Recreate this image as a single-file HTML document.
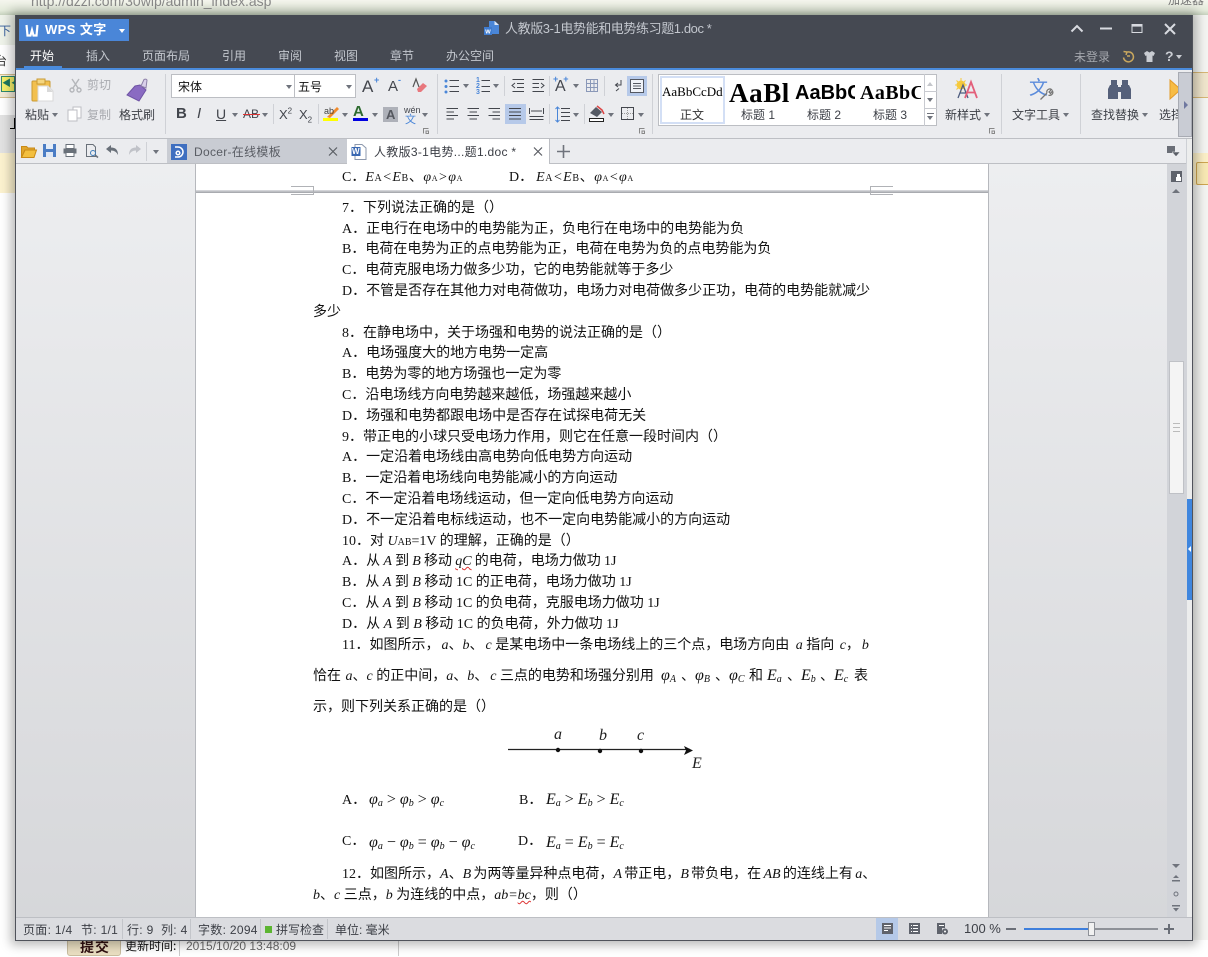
<!DOCTYPE html>
<html lang="zh"><head><meta charset="utf-8"><title>WPS 文字</title>
<style>
html,body{margin:0;padding:0}
body{width:1208px;height:956px;overflow:hidden;position:relative;background:#fff;font-family:"Liberation Sans","Noto Sans CJK SC",sans-serif;}
.a{position:absolute}
.t{position:absolute;white-space:nowrap}
.u{position:absolute;white-space:nowrap;font-size:12px;line-height:16px;color:#3c3f46;font-family:"Liberation Sans","Noto Sans CJK SC",sans-serif}
.s{letter-spacing:.3px}
.m{position:absolute;white-space:nowrap;font-size:12px;line-height:16px;color:#c3c7ce;transform:translateX(-50%)}
.d{position:absolute;white-space:nowrap;font-size:14px;line-height:20px;color:#111;font-family:"Liberation Serif","WenQuanYi Zen Hei","Noto Sans CJK SC",serif;letter-spacing:0;margin-top:2px}
.d i{font-family:"Liberation Serif",serif;font-style:italic}
.d sub{font-size:9px;line-height:0;vertical-align:-2px}
.f{font-size:16px}
.f sub{font-size:10px}
.sep{position:absolute;width:1px;background:#cfd1d6}
.arr{position:absolute;width:0;height:0;border-left:3.5px solid transparent;border-right:3.5px solid transparent;border-top:4px solid #6f737c}
.sq{position:absolute;width:1px;background:#c3c5ca}
svg{position:absolute;overflow:visible}
</style></head><body>

<!-- background behind the window -->
<div class="a" style="left:0;top:0;width:1208px;height:15px;background:linear-gradient(#f5f6ee,#e4ebdb 70%,#c7d3bf)"></div>
<div class="t" style="left:31px;top:-7px;font-size:14px;color:#8a8a8a">http://dzzi.com/30wip/admin_index.asp</div>
<div class="t" style="left:1168px;top:-9px;font-size:12px;color:#777;font-family:'Noto Sans CJK SC',sans-serif">加速器</div>
<div class="a" style="left:0;top:15px;width:15px;height:30px;background:#eff3ea"></div>
<div class="t" style="left:-1px;top:22px;font-size:12px;color:#345d9b;font-family:'Noto Sans CJK SC',sans-serif">下</div>
<div class="a" style="left:0;top:45px;width:15px;height:26px;background:#fff"></div>
<div class="t" style="left:-5px;top:52px;font-size:12px;color:#333;font-family:'Noto Sans CJK SC',sans-serif">台</div>
<div class="a" style="left:0;top:74px;width:15px;height:22px;background:#f3ead6;border-top:1px solid #d5bf8e;border-bottom:1px solid #d5bf8e"></div>
<div class="a" style="left:1px;top:76px;width:12px;height:14px;background:#f5f06a;border:1px solid #2f8a70"></div>
<div class="t" style="left:2px;top:78px;font-size:9px;line-height:10px;color:#1f7a60;font-weight:bold">◀◀</div>
<div class="a" style="left:0;top:115px;width:15px;height:38px;background:#e2e2e2"></div>
<div class="a" style="left:10px;top:128px;width:5px;height:1px;background:#000"></div>
<div class="a" style="left:14px;top:118px;width:1px;height:11px;background:#000"></div>
<div class="a" style="left:0;top:153px;width:15px;height:40px;background:#fcf2cf"></div>
<div class="a" style="left:1193px;top:15px;width:15px;height:941px;background:#f4f5f2"></div>
<div class="a" style="left:1193px;top:72px;width:15px;height:24px;background:#f0e6cd;border-top:1px solid #d8b775;border-bottom:1px solid #d8b775"></div>
<div class="a" style="left:1193px;top:153px;width:15px;height:32px;background:#fcf0c8"></div>
<div class="a" style="left:1196px;top:162px;width:12px;height:21px;background:#f8e9b4;border:1px solid #cfa650;border-radius:2px"></div>
<div class="a" style="left:0;top:940px;width:1208px;height:16px;background:#fff"></div>
<div class="a" style="left:67px;top:936px;width:54px;height:20px;background:#eadfc2;border:1px solid #c9bd9f;box-sizing:border-box;border-radius:3px"></div>
<div class="t" style="left:80px;top:937px;font-size:14px;line-height:20px;font-weight:bold;color:#301010;font-family:'Noto Sans CJK SC',sans-serif;letter-spacing:1px">提交</div>
<div class="t" style="left:125px;top:937px;font-size:12px;line-height:18px;color:#111;font-family:'Noto Sans CJK SC',sans-serif">更新时间:</div>
<div class="t" style="left:186px;top:937px;font-size:12px;line-height:18px;color:#6a6a6a">2015/10/20 13:48:09</div>
<div class="a" style="left:179px;top:940px;width:1px;height:16px;background:#ccc"></div>
<div class="a" style="left:398px;top:940px;width:1px;height:16px;background:#ccc"></div>

<!-- window -->
<div class="a" style="left:15px;top:15px;width:1178px;height:926px;background:#ebecef;box-shadow:0 0 10px 4px rgba(0,0,0,.28)"></div>
<div class="a" style="left:15px;top:15px;width:1178px;height:53px;background:#454952"></div>
<div class="a" style="left:16px;top:68px;width:1176px;height:2px;background:#4a8bdc"></div>
<div class="a" style="left:15px;top:15px;width:1px;height:926px;background:#50535b"></div>
<div class="a" style="left:1192px;top:15px;width:1px;height:926px;background:#50535b"></div>

<!-- WPS button -->
<div class="a" style="left:19px;top:19px;width:110px;height:22px;background:#4a86d8"></div>
<svg style="left:25px;top:23px" width="14" height="14" viewBox="0 0 14 14"><path d="M1.500 2 L2.500 12.500 H5.500 L7 7 L8.500 12.500 H11.500 L12.500 2" fill="none" stroke="#fff" stroke-width="2.200"/></svg>
<div class="t" style="left:45px;top:21px;font-size:13px;line-height:18px;font-weight:bold;color:#fff;letter-spacing:.4px;font-family:'Liberation Sans','Noto Sans CJK SC',sans-serif">WPS 文字</div>
<div class="arr" style="left:119px;top:29px;border-top-color:#fff"></div>

<!-- title -->
<svg style="left:484px;top:21px" width="15" height="15" viewBox="0 0 15 15"><path d="M5 0 H11 L15 4 V13 H5 Z" fill="#4a86d8"/><path d="M10.500 0 V4 H15" fill="#dfe9f7"/><rect x="0" y="6" width="8" height="8" fill="#3f7cd0"/><text x="1.200" y="12.500" font-size="7" font-weight="bold" fill="#fff" font-family="Liberation Sans">w</text></svg>
<div class="t" style="left:505px;top:20px;font-size:13px;line-height:18px;color:#c3c7ce;font-family:'Liberation Sans','Noto Sans CJK SC',sans-serif;letter-spacing:-.4px">人教版3-1电势能和电势练习题1.doc *</div>

<!-- window controls -->
<svg style="left:1070px;top:22px" width="112" height="14" viewBox="0 0 112 14" fill="none" stroke="#d8dae0" stroke-width="2"><path d="M1.500 9.500 L7 4 L12.500 9.500"/><path d="M30 6.500 H42"/><rect x="62" y="2.500" width="10" height="8" stroke-width="1"/><path d="M62 3.500 H72" stroke-width="2.200"/><path d="M95 2 L105 12 M105 2 L95 12"/></svg>

<!-- menu -->
<div class="m" style="left:42px;top:48px;color:#fff">开始</div>
<div class="m" style="left:98px;top:48px">插入</div>
<div class="m" style="left:166px;top:48px">页面布局</div>
<div class="m" style="left:234px;top:48px">引用</div>
<div class="m" style="left:290px;top:48px">审阅</div>
<div class="m" style="left:346px;top:48px">视图</div>
<div class="m" style="left:402px;top:48px">章节</div>
<div class="m" style="left:470px;top:48px">办公空间</div>
<div class="a" style="left:24px;top:66px;width:38px;height:2px;background:#4a8bdc"></div>
<div class="t" style="left:1074px;top:49px;font-size:12px;line-height:16px;color:#a5a8ae;font-family:'Noto Sans CJK SC',sans-serif">未登录</div>
<svg style="left:1122px;top:50px" width="13" height="13" viewBox="0 0 13 13"><path d="M4 2.500 A5 5 0 1 1 1.500 7.500 M1.500 1.500 L5 2 L4 5 M5 6 H8" fill="none" stroke="#c9a75e" stroke-width="1.500"/></svg>
<svg style="left:1143px;top:50px" width="13" height="13" viewBox="0 0 13 13"><path d="M4 1 L6.500 2.500 L9 1 L12 3 L10.500 6 L9.500 5.500 V12 H3.500 V5.500 L2.500 6 L1 3 Z" fill="#c9ccd2"/></svg>
<div class="t" style="left:1165px;top:47px;font-size:14px;line-height:18px;font-weight:bold;color:#c9ccd2">?</div>
<div class="arr" style="left:1176px;top:55px;border-top-color:#c9ccd2"></div>

<!-- ribbon: clipboard -->
<svg style="left:31px;top:78px" width="24" height="24" viewBox="0 0 24 24"><rect x="1" y="3" width="18" height="20" rx="1" fill="#f2c04f" stroke="#c99a33"/><rect x="6" y="1" width="8" height="5" fill="#f5d680" stroke="#c99a33"/><path d="M7 8 H17 L22 13 V23 H7 Z" fill="#fff" stroke="#d9d9d9"/><path d="M16 8 V14 H22 Z" fill="#d9d9d9"/></svg>
<div class="u" style="left:25px;top:107px">粘贴</div>
<div class="arr" style="left:52px;top:113px"></div>
<svg style="left:69px;top:78px" width="13" height="15" viewBox="0 0 13 15" fill="none" stroke="#b4b6ba" stroke-width="1.400"><path d="M3 1 L9 10 M10 1 L4 10"/><circle cx="3" cy="12" r="2"/><circle cx="10" cy="12" r="2"/></svg>
<div class="u" style="left:87px;top:77px;color:#a9abb0">剪切</div>
<svg style="left:67px;top:106px" width="15" height="16" viewBox="0 0 15 16" fill="#fff" stroke="#bcbec3"><rect x="6" y="1" width="8" height="11"/><rect x="1" y="4" width="9" height="11"/></svg>
<div class="u" style="left:87px;top:107px;color:#a9abb0">复制</div>
<svg style="left:126px;top:78px" width="23" height="24" viewBox="0 0 23 24"><path d="M14 7 L20 12 L13 23 L1 17 L9 8 Z" fill="#8a6bc2" stroke="#6e53a4"/><path d="M15 8 L18 1.500 Q20 0.500 21 2 L20 10 Z" fill="#d9d0ea" stroke="#8d80a8"/></svg>
<div class="u" style="left:119px;top:107px">格式刷</div>
<div class="sep" style="left:165px;top:74px;height:60px"></div>

<!-- font -->
<div class="a" style="left:171px;top:74px;width:185px;height:24px;background:#fff;border:1px solid #bcbec3;box-sizing:border-box"></div>
<div class="a" style="left:294px;top:74px;width:1px;height:24px;background:#bcbec3"></div>
<div class="u" style="left:178px;top:79px;color:#111">宋体</div>
<div class="arr" style="left:286px;top:85px"></div>
<div class="u" style="left:298px;top:79px;color:#111">五号</div>
<div class="arr" style="left:346px;top:85px"></div>
<div class="t" style="left:362px;top:77px;font-size:17px;line-height:20px;color:#43464d">A</div>
<div class="t" style="left:374px;top:75px;font-size:9px;line-height:10px;font-weight:bold;color:#4a86d8">+</div>
<div class="t" style="left:388px;top:77px;font-size:15px;line-height:20px;color:#43464d">A</div>
<div class="t" style="left:398px;top:75px;font-size:9px;line-height:10px;font-weight:bold;color:#4a86d8">-</div>
<svg style="left:412px;top:78px" width="16" height="16" viewBox="0 0 16 16"><path d="M1 9 L4 1 L7 9" fill="none" stroke="#555" stroke-width="1.200"/><path d="M5 11 L11 5 L15 8 L9 14 H6 Z" fill="#e8777d"/></svg>

<div class="t" style="left:176px;top:105px;font-size:15px;line-height:18px;font-weight:bold;color:#43464d">B</div>
<div class="t" style="left:197px;top:105px;font-size:15px;line-height:18px;font-style:italic;color:#43464d">I</div>
<div class="t" style="left:216px;top:105px;font-size:14px;line-height:18px;color:#43464d;text-decoration:underline">U</div>
<div class="arr" style="left:232px;top:113px"></div>
<div class="t" style="left:243px;top:106px;font-size:12px;line-height:16px;color:#43464d">AB</div>
<div class="a" style="left:243px;top:114px;width:17px;height:1px;background:#d33"></div>
<div class="arr" style="left:262px;top:113px"></div>
<div class="sep" style="left:273px;top:104px;height:20px"></div>
<div class="t" style="left:279px;top:106px;font-size:13px;line-height:18px;color:#43464d">X<sup style="font-size:8px;line-height:0">2</sup></div>
<div class="t" style="left:299px;top:106px;font-size:13px;line-height:18px;color:#43464d">X<sub style="font-size:8px;line-height:0">2</sub></div>
<div class="sep" style="left:318px;top:104px;height:20px"></div>
<svg style="left:323px;top:105px" width="17" height="17" viewBox="0 0 17 17"><rect x="0" y="13" width="15" height="3" fill="#ff0"/><path d="M4 12 L14 2 L16 4 L7 13 Z" fill="#f08a2c"/><text x="1" y="9" font-size="9" fill="#444" font-family="Liberation Sans">ab</text></svg>
<div class="arr" style="left:342px;top:113px"></div>
<div class="t" style="left:353px;top:103px;font-size:15px;line-height:18px;font-weight:bold;color:#2d6b2f">A</div>
<div class="a" style="left:353px;top:118px;width:15px;height:3px;background:#0000e0"></div>
<div class="arr" style="left:372px;top:113px"></div>
<div class="a" style="left:383px;top:107px;width:15px;height:15px;background:#aeb1b9"></div>
<div class="t" style="left:386px;top:106px;font-size:13px;line-height:17px;color:#55585f;font-weight:bold">A</div>
<div class="t" style="left:404px;top:105px;font-size:9px;line-height:10px;color:#43464d">wén</div>
<div class="t" style="left:405px;top:113px;font-size:11px;line-height:12px;color:#4a86d8;font-family:'Noto Sans CJK SC',sans-serif">文</div>
<div class="arr" style="left:422px;top:113px"></div>
<svg style="left:423px;top:128px" width="6" height="6" viewBox="0 0 6 6" fill="none" stroke="#888"><path d="M0.500 5.500 V0.500 H5.500 M3 3 H5.500 V5.500 H3 Z"/></svg>
<div class="sep" style="left:437px;top:74px;height:60px"></div>

<!-- paragraph -->
<svg style="left:444px;top:77px" width="205" height="49" viewBox="0 0 205 49" fill="none" stroke="#43464d">
<g stroke="#4a86d8" fill="#4a86d8"><circle cx="2" cy="4" r="1"/><circle cx="2" cy="9.500" r="1"/><circle cx="2" cy="15" r="1"/></g>
<path d="M5.500 3.500 H15 M5.500 9.500 H15 M5.500 14.500 H15"/>
<path d="M37.500 3.500 H46 M37.500 9.500 H46 M37.500 14.500 H46"/>
<path d="M68.500 2.500 H80 M73 6.500 H80 M73 10.500 H80 M68.500 14.500 H80 M71 6 L68 8.500 L71 11" />
<path d="M88.500 2.500 H100 M88.500 6.500 H95 M88.500 10.500 H95 M88.500 14.500 H100 M97 6 L100 8.500 L97 11"/>
<path d="M142.500 2.500 H153.500 V14.500 H142.500 Z M142.500 6.500 H153.500 M142.500 10.500 H153.500 M146.500 2.500 V14.500 M150 2.500 V14.500" stroke="#8a98b8"/>
<path d="M177 3 V8 H172 M174 6 L171.500 8 L174 10 M172 14 L175 11.500" />
<path d="M2.500 31.500 H14 M2.500 35 H10 M2.500 38.500 H14 M2.500 42 H10"/>
<path d="M23.500 31.500 H35 M25.500 35 H33 M23.500 38.500 H35 M25.500 42 H33"/>
<path d="M44.500 31.500 H56 M48.500 35 H56 M44.500 38.500 H56 M48.500 42 H56"/>
</svg>
<div class="t" style="left:476px;top:78px;font-size:7px;line-height:6px;color:#4a86d8;font-weight:bold">1<br>2<br>3</div>
<div class="arr" style="left:463px;top:84px"></div>
<div class="arr" style="left:493px;top:84px"></div>
<div class="sep" style="left:504px;top:76px;height:20px"></div>
<div class="sep" style="left:549px;top:76px;height:20px"></div>
<div class="t" style="left:555px;top:78px;font-size:16px;line-height:18px;color:#43464d">A</div>
<div class="t" style="left:553px;top:74px;font-size:9px;line-height:10px;color:#4a86d8;font-weight:bold">+&nbsp;&nbsp;+</div>
<div class="arr" style="left:573px;top:84px"></div>
<div class="sep" style="left:604px;top:76px;height:20px"></div>
<div class="a" style="left:627px;top:76px;width:20px;height:20px;background:#b6c9e9"></div>
<div class="a" style="left:630px;top:79px;width:14px;height:14px;background:#f0f3f9;border:1px solid #545862;box-sizing:border-box"></div>
<svg style="left:633px;top:82px" width="8" height="8" viewBox="0 0 8 8" stroke="#545862"><path d="M0 1.500 H8 M0 4 H8 M0 6.500 H8"/></svg>
<div class="a" style="left:505px;top:104px;width:21px;height:20px;background:#b6c9e9"></div>
<svg style="left:509px;top:108px" width="36" height="13" viewBox="0 0 36 13" stroke="#43464d" fill="none"><path d="M0 .5 H12 M0 4 H12 M0 7.500 H12 M0 11 H12"/><path d="M20.500 0 V6 M34.500 0 V6 M22 3 H33 M20.500 8.500 H34.500 M20.500 11.500 H34.500"/></svg>
<div class="sep" style="left:549px;top:104px;height:20px"></div>
<svg style="left:555px;top:106px" width="15" height="17" viewBox="0 0 15 17" fill="none" stroke="#43464d"><path d="M6 2.500 H15 M6 6.500 H15 M6 10.500 H15 M6 14.500 H15"/><path d="M2.500 1 V16 M.5 3 L2.500 1 L4.500 3 M.5 14 L2.500 16 L4.500 14" stroke="#4a86d8"/></svg>
<div class="arr" style="left:573px;top:113px"></div>
<div class="sep" style="left:584px;top:104px;height:20px"></div>
<svg style="left:589px;top:105px" width="16" height="17" viewBox="0 0 16 17"><path d="M1 8 L7 2 L13 7 L8 12 Z" fill="#555a64"/><path d="M8 1 L13 5 L15 9" stroke="#d44" fill="none" stroke-width="1.500"/><rect x="0.500" y="13.500" width="14" height="3" fill="#fff" stroke="#222"/></svg>
<div class="arr" style="left:608px;top:113px"></div>
<svg style="left:621px;top:107px" width="13" height="13" viewBox="0 0 13 13" fill="none" stroke="#43464d"><rect x=".5" y=".5" width="12" height="12"/><path d="M6.500 1 V12 M1 6.500 H12" stroke-dasharray="1 1" stroke="#999"/></svg>
<div class="arr" style="left:638px;top:113px"></div>
<svg style="left:639px;top:128px" width="6" height="6" viewBox="0 0 6 6" fill="none" stroke="#888"><path d="M0.500 5.500 V0.500 H5.500 M3 3 H5.500 V5.500 H3 Z"/></svg>
<div class="sep" style="left:652px;top:74px;height:60px"></div>

<!-- styles gallery -->
<div class="a" style="left:658px;top:74px;width:279px;height:52px;background:#fff;border:1px solid #bcbec3;box-sizing:border-box"></div>
<div class="a" style="left:660px;top:76px;width:65px;height:48px;border:2px solid #d3dff5;box-sizing:border-box"></div>
<div class="a" style="left:662px;top:82px;width:61px;height:20px;overflow:hidden"><div class="t" style="left:0;top:0;font:13px/20px 'Liberation Serif',serif;color:#000">AaBbCcDd</div></div>
<div class="u" style="left:680px;top:107px;color:#333">正文</div>
<div class="a" style="left:729px;top:78px;width:61px;height:30px;overflow:hidden"><div class="t" style="left:0;top:0;font:bold 27px/30px 'Liberation Serif',serif;color:#000;letter-spacing:.6px">AaBlA</div></div>
<div class="u" style="left:741px;top:107px">标题 1</div>
<div class="a" style="left:795px;top:81px;width:60px;height:24px;overflow:hidden"><div class="t" style="left:0;top:0;font:bold 20px/24px 'Liberation Sans',sans-serif;color:#000">AaBbC</div></div>
<div class="u" style="left:807px;top:107px">标题 2</div>
<div class="a" style="left:860px;top:81px;width:61px;height:24px;overflow:hidden"><div class="t" style="left:0;top:0;font:bold 20px/24px 'Liberation Serif',serif;color:#000;letter-spacing:.4px">AaBbC</div></div>
<div class="u" style="left:873px;top:107px">标题 3</div>
<div class="a" style="left:924px;top:74px;width:1px;height:52px;background:#c8cad0"></div>
<div class="a" style="left:924px;top:91px;width:13px;height:1px;background:#c8cad0"></div>
<div class="a" style="left:924px;top:108px;width:13px;height:1px;background:#c8cad0"></div>
<div class="arr" style="left:927px;top:82px;border-top:0;border-bottom:4px solid #c4c6cb"></div>
<div class="arr" style="left:927px;top:98px"></div>
<div class="a" style="left:927px;top:113px;width:7px;height:1px;background:#6f737c"></div>
<div class="arr" style="left:927px;top:116px"></div>

<!-- new style -->
<svg style="left:955px;top:78px" width="24" height="22" viewBox="0 0 24 22"><circle cx="6" cy="7" r="4.500" fill="#f6c93b"/><path d="M6 0 V14 M0 7 H12 M1.500 2.500 L10.500 11.500 M10.500 2.500 L1.500 11.500" stroke="#f6c93b"/><path d="M3 20 L8 7 L13 20 M5 15 H11" fill="none" stroke="#4d5c7f" stroke-width="1.300"/><path d="M10 20 L16 4 L22 20 M12.500 14.500 H19.500" fill="none" stroke="#e35f7a" stroke-width="1.800"/></svg>
<div class="u" style="left:945px;top:107px">新样式</div>
<div class="arr" style="left:984px;top:113px"></div>
<svg style="left:989px;top:128px" width="6" height="6" viewBox="0 0 6 6" fill="none" stroke="#888"><path d="M0.500 5.500 V0.500 H5.500 M3 3 H5.500 V5.500 H3 Z"/></svg>
<div class="sep" style="left:1001px;top:74px;height:60px"></div>
<div class="t" style="left:1029px;top:76px;font-size:19px;line-height:22px;color:#5b8bdb;font-family:'Noto Sans CJK SC',sans-serif">文</div>
<svg style="left:1039px;top:88px" width="14" height="13" viewBox="0 0 14 13"><path d="M1.500 11.500 L8 5 M8 5 A3 3 0 0 1 12.500 1.500 L10 4 L11.500 5.500 L13.500 3 A3 3 0 0 1 9.500 7" fill="#fff" stroke="#777" stroke-width="1.300"/></svg>
<div class="u" style="left:1012px;top:107px">文字工具</div>
<div class="arr" style="left:1063px;top:113px"></div>
<div class="sep" style="left:1080px;top:74px;height:60px"></div>
<svg style="left:1108px;top:79px" width="23" height="21" viewBox="0 0 23 21" fill="#55607a"><rect x="3" y="1" width="6" height="5"/><rect x="14" y="1" width="6" height="5"/><path d="M2 6 H10 L10 20 H0 V10 Z M13 6 H21 L23 10 V20 H13 Z"/><rect x="10" y="8" width="3" height="5"/></svg>
<div class="u" style="left:1091px;top:107px">查找替换</div>
<div class="arr" style="left:1142px;top:113px"></div>
<div class="u" style="left:1159px;top:107px">选择</div>
<svg style="left:1169px;top:79px" width="10" height="22" viewBox="0 0 10 22"><path d="M1 1 V20 L10 12 V9 Z" fill="#f7bc45" stroke="#e39b2a"/></svg>
<div class="a" style="left:1178px;top:72px;width:14px;height:65px;background:#c9ccd4;border:1px solid #a8abb3;box-sizing:border-box"></div>
<div class="a" style="left:1184px;top:101px;border-left:4px solid #6f78a0;border-top:4px solid transparent;border-bottom:4px solid transparent"></div>

<!-- tab bar -->
<div class="a" style="left:16px;top:138px;width:1176px;height:1px;background:#bdbfc4"></div>
<div class="a" style="left:16px;top:163px;width:1176px;height:1px;background:#bdbfc4"></div>
<svg style="left:21px;top:144px" width="16" height="14" viewBox="0 0 16 14"><path d="M0.500 2.500 H5.500 L7 4 H13.500 V6 H4 L.5 13.500 Z" fill="#e1a62c" stroke="#c98a17"/><path d="M4 6 H15.500 L13 13.500 H.5 Z" fill="#f3bf3f" stroke="#c98a17"/></svg>
<svg style="left:43px;top:144px" width="13" height="13" viewBox="0 0 13 13"><rect width="13" height="13" fill="#4a7cc4"/><rect x="3" y="0" width="7" height="5" fill="#e4ecf7"/><rect x="3" y="8" width="7" height="5" fill="#dfe7f4"/></svg>
<svg style="left:63px;top:144px" width="14" height="13" viewBox="0 0 14 13"><rect x="3" y="0.500" width="8" height="4" fill="#fff" stroke="#697079"/><rect x="0.500" y="4.500" width="13" height="5" fill="#697079"/><rect x="3" y="8.500" width="8" height="4" fill="#fff" stroke="#697079"/></svg>
<svg style="left:85px;top:144px" width="14" height="14" viewBox="0 0 14 14" fill="none" stroke="#697079"><path d="M1.500 .5 H8 L10.500 3 V12.500 H1.500 Z"/><circle cx="8" cy="9" r="2.500" stroke="#3f7cb8"/><path d="M10 11 L13 13.500" stroke-width="1.500"/></svg>
<svg style="left:106px;top:145px" width="13" height="11" viewBox="0 0 13 11"><path d="M5 0 L0 4 L5 8 V5.500 Q10 5.500 12 10 Q12 2.500 5 2.500 Z" fill="#697079"/></svg>
<svg style="left:128px;top:145px" width="13" height="11" viewBox="0 0 13 11"><path d="M8 0 L13 4 L8 8 V5.500 Q3 5.500 1 10 Q1 2.500 8 2.500 Z" fill="#c0c2c8"/></svg>
<div class="sep" style="left:146px;top:142px;height:19px"></div>
<div class="arr" style="left:153px;top:150px"></div>
<div class="a" style="left:167px;top:139px;width:180px;height:24px;background:#c9ccd3"></div>
<div class="a" style="left:171px;top:144px;width:16px;height:16px;background:#3f6fc0"></div>
<svg style="left:172px;top:145px" width="14" height="14" viewBox="0 0 14 14" fill="none" stroke="#fff" stroke-width="1.500"><path d="M3 2 H6 A5 5 0 0 1 6 12 H3"/><circle cx="6" cy="8" r="1.800"/></svg>
<div class="u s" style="left:194px;top:144px;color:#5a5d64">Docer-在线模板</div>
<svg style="left:328px;top:147px" width="10" height="9" viewBox="0 0 10 9" stroke="#5a5d64" stroke-width="1.200"><path d="M1 0.500 L9 8.500 M9 0.500 L1 8.500"/></svg>
<div class="a" style="left:347px;top:139px;width:202px;height:25px;background:#fff"></div>
<svg style="left:351px;top:144px" width="16" height="16" viewBox="0 0 16 16"><path d="M4 .5 H11 L15 4 V15.500 H4 Z" fill="#fff" stroke="#8c98ad"/><rect x="0.500" y="3" width="9" height="9" fill="#3a68b2"/><text x="1" y="10" font-size="8" font-weight="bold" fill="#fff" font-family="Liberation Sans">W</text></svg>
<div class="u s" style="left:374px;top:144px;color:#3b3e45">人教版3-1电势...题1.doc *</div>
<svg style="left:533px;top:147px" width="10" height="9" viewBox="0 0 10 9" stroke="#5a5d64" stroke-width="1.200"><path d="M1 0.500 L9 8.500 M9 0.500 L1 8.500"/></svg>
<div class="a" style="left:549px;top:139px;width:1px;height:25px;background:#bdbfc4"></div>
<svg style="left:557px;top:145px" width="13" height="13" viewBox="0 0 13 13" stroke="#6f737c" stroke-width="1.600"><path d="M6.500 0 V13 M0 6.500 H13"/></svg>
<svg style="left:1167px;top:146px" width="13" height="11" viewBox="0 0 13 11"><path d="M0 0 H8 V7 H0 Z" fill="#6a6e77"/><path d="M5 6 H13 L9 10.500 Z" fill="#5a5e67" stroke="#ebecef" stroke-width=".5"/></svg>
<div class="a" style="left:1186px;top:139px;width:1px;height:25px;background:#cdd0d5"></div>

<!-- workspace -->
<div class="a" style="left:16px;top:164px;width:180px;height:753px;background:linear-gradient(#edeef0,#d6d7da)"></div>
<div class="a" style="left:989px;top:164px;width:178px;height:753px;background:linear-gradient(#edeef0,#d6d7da)"></div>
<div class="a" style="left:196px;top:164px;width:792px;height:753px;background:#fff"></div>
<div class="a" style="left:988px;top:164px;width:1px;height:753px;background:#b6b8bd"></div>
<div class="a" style="left:195px;top:164px;width:1px;height:753px;background:#b6b8bd"></div>
<div class="a" style="left:196px;top:190px;width:792px;height:3px;background:linear-gradient(#dedfe2,#9fa1a6)"></div>
<div class="a" style="left:291px;top:186px;width:23px;height:9px;border:1px solid #b0b2b6;border-left:0;box-sizing:border-box"></div>
<div class="a" style="left:870px;top:186px;width:23px;height:9px;border:1px solid #b0b2b6;border-right:0;box-sizing:border-box"></div>

<!-- scrollbar -->
<div class="a" style="left:1167px;top:164px;width:20px;height:753px;background:#d2d4d9"></div>
<div class="a" style="left:1187px;top:139px;width:5px;height:778px;background:#eceded"></div>
<div class="a" style="left:1187px;top:499px;width:5px;height:101px;background:#3f86de"></div>
<div class="a" style="left:1188px;top:546px;border-right:3px solid #fff;border-top:3px solid transparent;border-bottom:3px solid transparent"></div>
<svg style="left:1171px;top:171px" width="11" height="11" viewBox="0 0 11 11"><rect width="11" height="11" fill="#5f636c"/><path d="M5 6 H10 V10 H5 Z M6 3 H9 V6 H6 Z" fill="#fff"/></svg>
<div class="a" style="left:1172px;top:189px;border-left:4px solid transparent;border-right:4px solid transparent;border-bottom:4px solid #6f737c"></div>
<div class="a" style="left:1169px;top:361px;width:15px;height:133px;background:#f4f4f4;border:1px solid #bfc1c6;box-sizing:border-box"></div>
<div class="a" style="left:1173px;top:423px;width:7px;height:9px;border-top:1px solid #bbb;border-bottom:1px solid #bbb;box-sizing:border-box"></div>
<div class="a" style="left:1173px;top:427px;width:7px;height:1px;background:#bbb"></div>
<div class="a" style="left:1172px;top:864px;border-left:4px solid transparent;border-right:4px solid transparent;border-top:4px solid #6f737c"></div>
<svg style="left:1172px;top:875px" width="8" height="40" viewBox="0 0 8 40" fill="#6f737c"><path d="M4 0 L7 3 H1 Z M0 5 H8 V6.500 H0 Z"/><circle cx="4" cy="19" r="2" fill="none" stroke="#6f737c"/><path d="M0 30 H8 V31.500 H0 Z M1 33 H7 L4 36.500 Z"/></svg>

<!-- document text -->
<div class="d" style="left:342px;top:166px">C．<span style="letter-spacing:.6px"><i>E</i><span style="font-size:10px">A</span><i>&lt;E</i><span style="font-size:10px">B</span>、<i>φ</i><span style="font-size:8px">A</span><i>&gt;φ</i><span style="font-size:8px">A</span></span></div>
<div class="d" style="left:509px;top:166px">D．<span style="letter-spacing:.6px;margin-left:3px"><i>E</i><span style="font-size:10px">A</span><i>&lt;E</i><span style="font-size:10px">B</span>、<i>φ</i><span style="font-size:8px">A</span><i>&lt;φ</i><span style="font-size:8px">A</span></span></div>
<div class="d" style="left:342px;top:197px">7．下列说法正确的是（）</div>
<div class="d" style="left:342px;top:218px">A．正电行在电场中的电势能为正，负电行在电场中的电势能为负</div>
<div class="d" style="left:342px;top:238px">B．电荷在电势为正的点电势能为正，电荷在电势为负的点电势能为负</div>
<div class="d" style="left:342px;top:259px">C．电荷克服电场力做多少功，它的电势能就等于多少</div>
<div class="d" style="left:342px;top:280px">D．不管是否存在其他力对电荷做功，电场力对电荷做多少正功，电荷的电势能就减少</div>
<div class="d" style="left:313px;top:301px">多少</div>
<div class="d" style="left:342px;top:322px">8．在静电场中，关于场强和电势的说法正确的是（）</div>
<div class="d" style="left:342px;top:342px">A．电场强度大的地方电势一定高</div>
<div class="d" style="left:342px;top:363px">B．电势为零的地方场强也一定为零</div>
<div class="d" style="left:342px;top:384px">C．沿电场线方向电势越来越低，场强越来越小</div>
<div class="d" style="left:342px;top:405px">D．场强和电势都跟电场中是否存在试探电荷无关</div>
<div class="d" style="left:342px;top:426px">9．带正电的小球只受电场力作用，则它在任意一段时间内（）</div>
<div class="d" style="left:342px;top:446px">A．一定沿着电场线由高电势向低电势方向运动</div>
<div class="d" style="left:342px;top:467px">B．一定沿着电场线向电势能减小的方向运动</div>
<div class="d" style="left:342px;top:488px">C．不一定沿着电场线运动，但一定向低电势方向运动</div>
<div class="d" style="left:342px;top:509px">D．不一定沿着电标线运动，也不一定向电势能减小的方向运动</div>
<div class="d" style="left:342px;top:530px">10．对 <i>U</i><span style="font-size:10px">AB</span>=1V 的理解，正确的是（）</div>
<div class="d" style="left:342px;top:550px;word-spacing:-.3px">A．从 <i>A</i> 到 <i>B</i> 移动 <i style="text-decoration:underline wavy #d33 1px">qC</i> 的电荷，电场力做功 1J</div>
<div class="d" style="left:342px;top:571px">B．从 <i>A</i> 到 <i>B</i> 移动 1C 的正电荷，电场力做功 1J</div>
<div class="d" style="left:342px;top:592px">C．从 <i>A</i> 到 <i>B</i> 移动 1C 的负电荷，克服电场力做功 1J</div>
<div class="d" style="left:342px;top:613px">D．从 <i>A</i> 到 <i>B</i> 移动 1C 的负电荷，外力做功 1J</div>
<div class="d" style="left:342px;top:634px">11．如图所示，<i style="margin-left:2px">a</i>、<i>b</i>、<i style="margin-left:2px">c</i> 是某电场中一条电场线上的三个点，电场方向由 <i style="margin-left:3px">a</i> 指向 <i style="margin-left:2px">c</i>，<i style="margin-left:2px">b</i></div>
<div class="d" style="left:313px;top:665px">恰在 <i style="margin-left:1px">a</i>、<i>c</i> 的正中间，<i>a</i>、<i>b</i>、<i style="margin-left:2px">c</i> 三点的电势和场强分别用</div>
<div class="d f" style="left:661px;top:664px"><i>φ<sub>A</sub></i></div>
<div class="d" style="left:681px;top:665px">、</div>
<div class="d f" style="left:695px;top:664px"><i>φ<sub>B</sub></i></div>
<div class="d" style="left:715px;top:665px">、</div>
<div class="d f" style="left:729px;top:664px"><i>φ<sub>C</sub></i></div>
<div class="d" style="left:749px;top:665px">和</div>
<div class="d f" style="left:767px;top:664px"><i>E<sub>a</sub></i></div>
<div class="d" style="left:787px;top:665px">、</div>
<div class="d f" style="left:801px;top:664px"><i>E<sub>b</sub></i></div>
<div class="d" style="left:820px;top:665px">、</div>
<div class="d f" style="left:834px;top:664px"><i>E<sub>c</sub></i></div>
<div class="d" style="left:854px;top:665px">表</div>
<div class="d" style="left:313px;top:696px">示，则下列关系正确的是（）</div>

<!-- diagram -->
<svg style="left:505px;top:725px" width="210" height="50" viewBox="0 0 210 50">
<path d="M3 24.500 H185" stroke="#222" stroke-width="1.300"/><path d="M188 25.500 L179 21 L181 25.500 L179 30 Z" fill="#111"/>
<circle cx="53" cy="25" r="2.200" fill="#111"/><circle cx="95" cy="26" r="2.200" fill="#111"/><circle cx="136" cy="26" r="2.200" fill="#111"/>
<g font-family="Liberation Serif" font-style="italic" font-size="16" fill="#222"><text x="49" y="14">a</text><text x="94" y="15">b</text><text x="132" y="15">c</text><text x="187" y="43">E</text></g>
</svg>

<div class="d" style="left:342px;top:789px">A．</div>
<div class="d f" style="left:369px;top:788px"><i>φ<sub>a</sub></i> &gt; <i>φ<sub>b</sub></i> &gt; <i>φ<sub>c</sub></i></div>
<div class="d" style="left:519px;top:789px">B．</div>
<div class="d f" style="left:546px;top:788px"><i>E<sub>a</sub></i> &gt; <i>E<sub>b</sub></i> &gt; <i>E<sub>c</sub></i></div>
<div class="d" style="left:342px;top:830px">C．</div>
<div class="d f" style="left:369px;top:831px"><i>φ<sub>a</sub></i> − <i>φ<sub>b</sub></i> = <i>φ<sub>b</sub></i> − <i>φ<sub>c</sub></i></div>
<div class="d" style="left:518px;top:830px">D．</div>
<div class="d f" style="left:546px;top:831px"><i>E<sub>a</sub></i> = <i>E<sub>b</sub></i> = <i>E<sub>c</sub></i></div>
<div class="d" style="left:342px;top:863px;word-spacing:-1.200px">12．如图所示，<i>A</i>、<i>B</i> 为两等量异种点电荷，<i>A</i> 带正电，<i>B</i> 带负电，在 <i>AB</i> 的连线上有 <i>a</i>、</div>
<div class="d" style="left:313px;top:884px"><i>b</i>、<i>c</i> 三点，<i>b</i> 为连线的中点，<i>ab=<span style="text-decoration:underline wavy #d33 1px">bc</span></i>，则（）</div>

<!-- status bar -->
<div class="a" style="left:16px;top:917px;width:1176px;height:23px;background:#dbdce0;border-top:1px solid #bdbfc4;box-sizing:border-box"></div>
<div class="a" style="left:15px;top:940px;width:1178px;height:1px;background:#50535b"></div>
<div class="u s" style="left:23px;top:922px">页面: 1/4</div>
<div class="u s" style="left:81px;top:922px">节: 1/1</div>
<div class="sq" style="left:122px;top:919px;height:20px"></div>
<div class="u s" style="left:127px;top:922px">行: 9</div>
<div class="u s" style="left:161px;top:922px">列: 4</div>
<div class="sq" style="left:190px;top:919px;height:20px"></div>
<div class="u s" style="left:198px;top:922px">字数: 2094</div>
<div class="sq" style="left:260px;top:919px;height:20px"></div>
<div class="a" style="left:265px;top:926px;width:7px;height:7px;background:#5cb531"></div>
<div class="u" style="left:276px;top:922px">拼写检查</div>
<div class="sq" style="left:327px;top:919px;height:20px"></div>
<div class="u" style="left:335px;top:922px">单位: 毫米</div>
<div class="a" style="left:876px;top:918px;width:22px;height:22px;background:#b5c9e8"></div>
<svg style="left:882px;top:923px" width="12" height="12" viewBox="0 0 12 12"><rect width="11" height="11" fill="#5f636c"/><path d="M2 2.500 H9 M2 5 H9 M2 7.500 H6" stroke="#fff"/></svg>
<svg style="left:909px;top:923px" width="12" height="12" viewBox="0 0 12 12"><rect width="11" height="11" fill="#5f636c"/><path d="M2 2.500 H3 M4 2.500 H9 M2 5.500 H3 M4 5.500 H9 M2 8.500 H3 M4 8.500 H9" stroke="#fff"/></svg>
<svg style="left:937px;top:923px" width="12" height="12" viewBox="0 0 12 12"><path d="M0 0 H8 V5 H5 V11 H0 Z" fill="#5f636c"/><path d="M2 2.500 H7" stroke="#fff"/><circle cx="8" cy="8.500" r="3" fill="#5f636c"/><circle cx="8" cy="8.500" r="1" fill="#fff"/></svg>
<div class="u" style="left:964px;top:921px;font-size:13px;color:#3c3f46">100 %</div>
<div class="a" style="left:1006px;top:928px;width:10px;height:2px;background:#6a6e77"></div>
<div class="a" style="left:1024px;top:928px;width:134px;height:2px;background:#8e9198"></div>
<div class="a" style="left:1024px;top:928px;width:65px;height:2px;background:#3f7fdc"></div>
<div class="a" style="left:1088px;top:922px;width:7px;height:14px;background:#f2f2f2;border:1px solid #8e9198;box-sizing:border-box"></div>
<div class="a" style="left:1164px;top:928px;width:10px;height:2px;background:#6a6e77"></div>
<div class="a" style="left:1168px;top:924px;width:2px;height:10px;background:#6a6e77"></div>
</body></html>
